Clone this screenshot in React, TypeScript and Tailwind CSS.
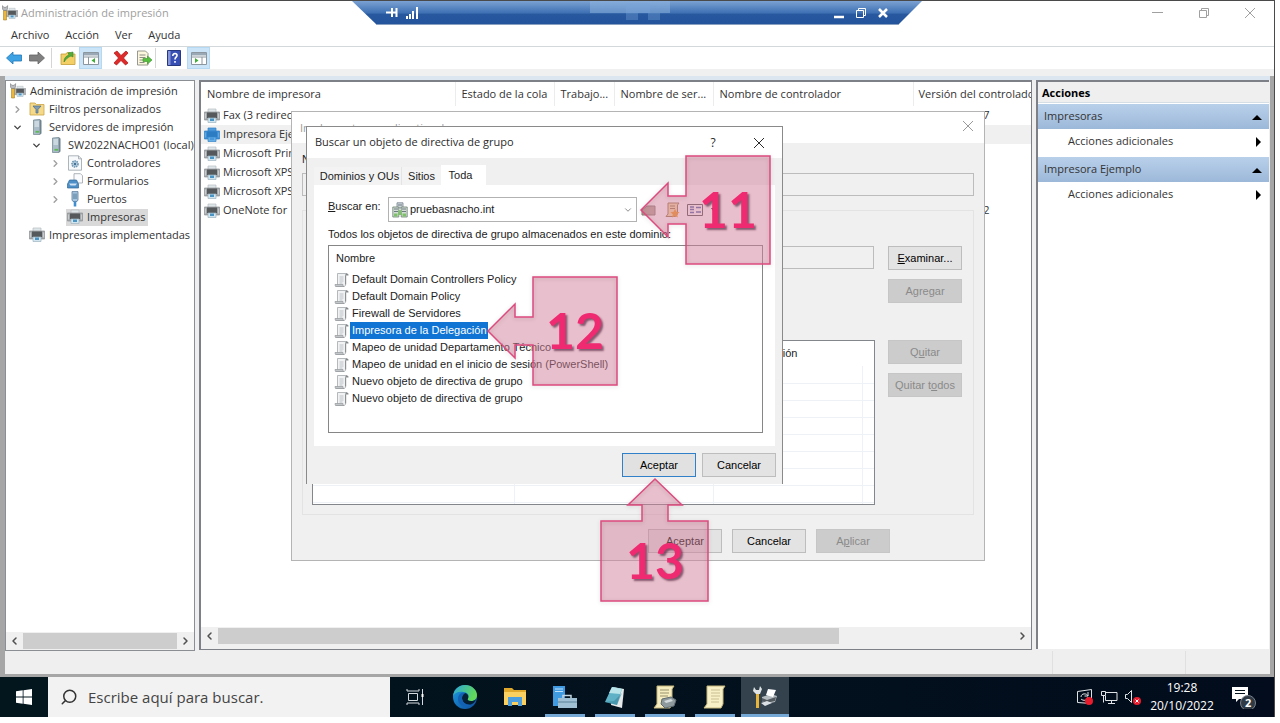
import type { ReactNode } from "react";
import { ChevronDown, ChevronLeft, ChevronRight, Search } from "lucide-react";

/* ── Data ────────────────────────────────────────────────────── */
type IconName = "manager" | "filter" | "server" | "driver" | "form" | "port" | "printer" | "printerBlue";

interface TreeNode {
  label: string;
  level: 0 | 1 | 2 | 3;
  icon: IconName;
  state?: "open" | "closed";
  selected?: boolean;
}

const TREE: TreeNode[] = [
  { label: "Administración de impresión", level: 0, icon: "manager" },
  { label: "Filtros personalizados", level: 1, icon: "filter", state: "closed" },
  { label: "Servidores de impresión", level: 1, icon: "server", state: "open" },
  { label: "SW2022NACHO01 (local)", level: 2, icon: "server", state: "open" },
  { label: "Controladores", level: 3, icon: "driver", state: "closed" },
  { label: "Formularios", level: 3, icon: "form", state: "closed" },
  { label: "Puertos", level: 3, icon: "port", state: "closed" },
  { label: "Impresoras", level: 3, icon: "printer", selected: true },
  { label: "Impresoras implementadas", level: 1, icon: "printer" },
];

const INDENT = { 0: "pl-[3px]", 1: "pl-[3px]", 2: "pl-[22px]", 3: "pl-[41px]" };

const PRINTERS = [
  { name: "Fax (3 redirecc", version: "10.0.17763.37" },
  { name: "Impresora Ejem", version: "", selected: true },
  { name: "Microsoft Print", version: "" },
  { name: "Microsoft XPS", version: "" },
  { name: "Microsoft XPS", version: "" },
  { name: "OneNote for", version: "16.0.7629.422" },
];

const POLICIES = [
  "Default Domain Controllers Policy",
  "Default Domain Policy",
  "Firewall de Servidores",
  "Impresora de la Delegación",
  "Mapeo de unidad Departamento Técnico",
  "Mapeo de unidad en el inicio de sesión (PowerShell)",
  "Nuevo objeto de directiva de grupo",
  "Nuevo objeto de directiva de grupo",
];

/* ── Small icons ─────────────────────────────────────────────── */
function PrinterShape({ blue = false }: { blue?: boolean }) {
  return (
    <>
      <path d="M4 1h8v4H4z" fill={blue ? "#4f9bdc" : "#dfe6ea"} stroke={blue ? "#3584c8" : "#b4bcc1"} strokeWidth=".7" />
      <path d="M.4 4h15.200v8H.4z" fill={blue ? "#3f8fd6" : "#a4a8ab"} stroke={blue ? "#2f7dc2" : "#8c9093"} strokeWidth=".7" />
      <path d="M3 4.500h10v5.500H3z" fill={blue ? "#2c7cc4" : "#55595c"} />
      <path d="M1.500 5.500v5M14.500 5.500v5" stroke={blue ? "#66aee6" : "#d3d6d8"} strokeWidth=".8" />
      <path d="M4 10h8v4.500H4z" fill={blue ? "#66aee6" : "#d3e6f0"} stroke={blue ? "#3584c8" : "#9fb4c0"} strokeWidth=".7" />
      <path d="M6 10.500h4v2.500H6z" fill={blue ? "#4b98da" : "#4b95c4"} />
    </>
  );
}

function Icon({ name }: { name: IconName }) {
  return (
    <svg viewBox="0 0 16 16" className="w-4 h-4 shrink-0" aria-hidden>
      {name === "printer" && <PrinterShape />}
      {name === "printerBlue" && <PrinterShape blue />}
      {name === "manager" && (
        <>
          <g transform="translate(4 2.500) scale(.76)">
            <PrinterShape />
          </g>
          <path d="M1.500 5h3v10h-3z" fill="#eab63c" stroke="#a58226" strokeWidth=".6" />
          <path d="M.4.600v3.400l1.300 1.500h2.600L5.600 4V.600L4.200 2.300H1.800z" fill="#b9bcbe" stroke="#75787a" strokeWidth=".6" />
        </>
      )}
      {name === "filter" && (
        <>
          <path d="M1 2h5l1.500 1.500H15V14H1z" fill="#f5d98a" stroke="#c9a545" strokeWidth=".8" />
          <path d="M4 5h8L9 8.500V12H7V8.500z" fill="#7f9db5" stroke="#4d6a82" strokeWidth=".7" />
        </>
      )}
      {name === "server" && (
        <>
          <path d="M4.500 1l6.500-.6V15.500H4.500z" fill="#a9bcc7" stroke="#6f828d" strokeWidth=".7" />
          <path d="M11 .4l1.500 1V14.500l-1.500 1z" fill="#6f828d" />
          <path d="M5.500 3H10M5.500 5H10M5.500 7H10" stroke="#eef4f7" />
          <path d="M6.500 12.800H10" stroke="#5dbb55" strokeWidth="1.800" />
        </>
      )}
      {name === "driver" && (
        <>
          <path d="M1.500.8h10l3 3V15.200h-13z" fill="#f7f9fb" stroke="#9aa2a8" strokeWidth=".8" />
          <path d="M11.500.8v3h3" fill="none" stroke="#9aa2a8" strokeWidth=".8" />
          <circle cx="8" cy="9" r="3" fill="#b7d0e2" stroke="#6c93b0" strokeDasharray="1.400 .8" strokeWidth="1.600" />
          <circle cx="8" cy="9" r="1.200" fill="#456f90" />
        </>
      )}
      {name === "form" && (
        <>
          <path d="M7 .7h6.500l2 2V10H7z" fill="#fafbfc" stroke="#9aa2a8" strokeWidth=".8" />
          <path d="M2.500 7h7l2 4v4H.5v-4z" fill="#4d8fc6" stroke="#2f689a" strokeWidth=".7" />
          <path d="M2 10.500h8l-1.500 2h-5z" fill="#cfe3f2" />
        </>
      )}
      {name === "port" && (
        <>
          <path d="M5 .6h6v8.400l-1 1.500H6L5 9z" fill="#a9c6e0" stroke="#5b7b99" strokeWidth=".8" />
          <path d="M6.700 10.500h2.600v5H6.700z" fill="#3f8fd0" />
          <path d="M7 2.500v5.500M9 2.500v5.500" stroke="#456f90" strokeWidth=".9" />
        </>
      )}
    </svg>
  );
}

function ScrollIcon() {
  return (
    <svg viewBox="0 0 16 16" className="w-4 h-4 shrink-0" aria-hidden>
      <path d="M3.500 1.500H13c-1.200 0-1.500 1-1.500 2v9c0 1.500-.5 2-2 2H1.500c1.500 0 2-.5 2-2z" fill="#f1f2f3" stroke="#a4a8ab" strokeWidth=".8" />
      <path d="M1 12.500h8c0 1.200.2 2 1 2H2.500c-1 0-1.500-.8-1.500-2z" fill="#c3c7ca" stroke="#94989b" strokeWidth=".7" />
      <path d="M11.500 3.500h3c0-1.300-.4-2-1.500-2-1 0-1.500.8-1.500 2z" fill="#85898c" />
      <path d="M11.700 3.500v9" stroke="#7f8386" strokeWidth=".9" />
      <path d="M5.500 5h4M5.500 7h4M5.500 9h4M5.500 11h3" stroke="#b3b7ba" strokeWidth=".8" />
    </svg>
  );
}

function DomainIcon() {
  return (
    <svg viewBox="0 0 16 16" className="w-4 h-4 shrink-0" aria-hidden>
      <path d="M5 .8h6V6H5z" fill="#cfd6da" stroke="#74808a" strokeWidth=".8" />
      <path d="M.8 5h6v10h-6zM9.200 5h6v10h-6z" fill="#d4ddd6" stroke="#6b7f70" strokeWidth=".8" />
      <path d="M2 7h4M2 9.500h4M10 7h4M10 9.500h4M6 3h4" stroke="#5f6f76" strokeWidth=".9" />
      <path d="M2 11.500h3.500v3H2zM10.500 11.500H14v3h-3.500zM6.500 9L8 7.500 9.500 9v4h-3z" fill="#7fc06a" />
    </svg>
  );
}

function CloseIcon({ className }: { className: string }) {
  return (
    <svg viewBox="0 0 12 12" className={className} fill="none" stroke="currentColor" aria-hidden>
      <path d="M1 1l10 10M11 1L1 11" />
    </svg>
  );
}

function RestoreIcon({ className }: { className: string }) {
  return (
    <svg viewBox="0 0 12 12" className={className} fill="none" stroke="currentColor" aria-hidden>
      <path d="M1.500 3.500h7v7h-7zM3.500 3.500v-2h7v7h-2" />
    </svg>
  );
}

/* ── Title bar, remote connection bar, menu, toolbar ─────────── */
function ConnectionBar() {
  return (
    <div className="absolute top-0 left-[352px] w-[570px] h-6 text-white">
      <svg viewBox="0 0 570 24" className="absolute inset-0 w-full h-full" preserveAspectRatio="none" aria-hidden>
        <defs>
          <linearGradient id="bar" x1="0" y1="0" x2="0" y2="1">
            <stop offset="0" stopColor="#7ba2d3" />
            <stop offset=".5" stopColor="#3e70b3" />
            <stop offset=".55" stopColor="#28599f" />
            <stop offset="1" stopColor="#23539b" />
          </linearGradient>
        </defs>
        <path d="M0 0h570l-24 24H25z" fill="url(#bar)" />
        <path d="M25 23.500h521" stroke="#8aa0c0" />
        <path d="M238 0h80v12h-80z" fill="#8fb5df" opacity=".5" />
        <path d="M274 2h24v10h-24zM274 12h12v7h-12zM296 12h12v7h-12z" fill="#7aa6da" opacity=".35" />
      </svg>
      <div className="relative flex items-center h-full pl-[33px] pr-[33px]">
        <button type="button" aria-label="Anclar" className="w-4 h-4">
          <svg viewBox="0 0 16 16" className="w-4 h-4" aria-hidden>
            <path d="M1 7.500h5M7 3v9M7 7.500h5M11.500 3v9" stroke="#fff" strokeWidth="2" />
          </svg>
        </button>
        <svg viewBox="0 0 14 14" className="w-3.5 h-3.5 ml-1" aria-hidden>
          <path d="M2 13v-3M5 13V8M8 13V5M12 13V1" stroke="#fff" strokeWidth="2" />
        </svg>
        <button type="button" aria-label="Minimizar" className="ml-auto w-3 h-3">
          <svg viewBox="0 0 12 12" className="w-3 h-3" aria-hidden>
            <path d="M1 10h10" stroke="#fff" strokeWidth="2.500" />
          </svg>
        </button>
        <button type="button" aria-label="Restaurar" className="ml-2.5 w-3 h-3">
          <RestoreIcon className="w-3 h-3" />
        </button>
        <button type="button" aria-label="Cerrar" className="ml-2.5 w-3 h-3">
          <svg viewBox="0 0 12 12" className="w-3 h-3" aria-hidden>
            <path d="M2 2l8 8M10 2l-8 8" stroke="#fff" strokeWidth="2.500" />
          </svg>
        </button>
      </div>
    </div>
  );
}

function TitleBar() {
  return (
    <header className="flex items-center h-6 pl-0.5 pr-[18px] text-[#a0a0a0]">
      <Icon name="manager" />
      <h1 className="ml-[3px]">Administración de impresión</h1>
      <div className="ml-auto flex items-center gap-[34px]">
        <button type="button" aria-label="Minimizar ventana" className="w-3 h-3">
          <svg viewBox="0 0 12 12" className="w-3 h-3" stroke="currentColor" aria-hidden>
            <path d="M0 5.500h11" />
          </svg>
        </button>
        <button type="button" aria-label="Restaurar ventana" className="w-3 h-3">
          <RestoreIcon className="w-3 h-3" />
        </button>
        <button type="button" aria-label="Cerrar ventana" className="w-3 h-3">
          <CloseIcon className="w-3 h-3" />
        </button>
      </div>
    </header>
  );
}

function ToolButton({ label, active = false, children }: { label: string; active?: boolean; children: ReactNode }) {
  return (
    <button
      type="button"
      aria-label={label}
      className={`flex items-center justify-center w-[23px] h-[22px] ${active ? "bg-[#cce4f7] border border-[#b5d8f3]" : ""}`}
    >
      <svg viewBox="0 0 16 16" className="w-4 h-4" aria-hidden>
        {children}
      </svg>
    </button>
  );
}

function Toolbar() {
  return (
    <div className="flex items-center h-[22px] pl-0.5">
      <ToolButton label="Atrás">
        <path d="M.5 8L7 2V5h8.500v6H7v3z" fill="#3da2e4" stroke="#2277b8" strokeWidth=".8" />
      </ToolButton>
      <ToolButton label="Adelante">
        <path d="M15.500 8L9 2V5H.5v6H9v3z" fill="#808080" stroke="#636363" strokeWidth=".8" />
      </ToolButton>
      <div className="w-px h-5 ml-[3px] mr-1 bg-[#d5d5d5]" />
      <ToolButton label="Subir un nivel">
        <path d="M1 4h5l1-1.500h3L11 4h4v10.500H1z" fill="#f3cf66" stroke="#c49f37" strokeWidth=".8" />
        <path d="M4 12c0-4 2-6 5-7L8 3l5-1v5l-2-1c-3 1-5 3-7 6z" fill="#53ae39" stroke="#38852a" strokeWidth=".6" />
      </ToolButton>
      <ToolButton label="Mostrar u ocultar árbol" active>
        <path d="M.5 2.500h15v12H.5z" fill="#fff" stroke="#8b969e" />
        <path d="M1 3h14v2.500H1z" fill="#9aa9b5" />
        <path d="M1 7h14M5.500 7v7" stroke="#8b969e" />
        <path d="M12 8v5L8.500 10.500z" fill="#3fae36" />
      </ToolButton>
      <div className="w-[7px]" />
      <ToolButton label="Eliminar">
        <path d="M1 3l3-2 4 4.500L13 1l2 2-4.500 5 4.500 5-2.500 2L8 10.500 3.500 15 1 13l4.500-5z" fill="#e02b2b" stroke="#a81616" strokeWidth=".7" />
      </ToolButton>
      <ToolButton label="Exportar lista">
        <path d="M1.500 1h8L12 3.500V15H1.500z" fill="#fbf6dd" stroke="#8c8f86" strokeWidth=".9" />
        <path d="M3.500 5h6M3.500 7.500h6M3.500 10h4M3.500 12.500h5" stroke="#8c8f86" />
        <path d="M7 8.500h4.500V6L16 10l-4.500 4v-2.500H7z" fill="#55bf3e" stroke="#35902a" strokeWidth=".6" />
      </ToolButton>
      <div className="w-px h-5 mr-1.5 bg-[#d5d5d5]" />
      <ToolButton label="Ayuda">
        <path d="M1.500.5h13v15h-13z" fill="#3850b5" stroke="#26387f" />
        <path d="M2 1h2.500v14H2z" fill="#8796d8" />
        <path d="M6.800 6c0-3.500 4.700-3 4.200-.3C10.700 7.300 9 7 9 9.500M9 11v1.800" fill="none" stroke="#fff" strokeWidth="1.600" />
      </ToolButton>
      <div className="w-0.5" />
      <ToolButton label="Mostrar u ocultar panel de acciones" active>
        <path d="M.5 2.500h15v12H.5z" fill="#fff" stroke="#8b969e" />
        <path d="M1 3h14v2.500H1z" fill="#9aa9b5" />
        <path d="M1 7h14M11 7v7" stroke="#8b969e" />
        <path d="M4 8v5l3.500-2.500z" fill="#3fae36" />
      </ToolButton>
    </div>
  );
}

/* ── Console panes ───────────────────────────────────────────── */
function ScrollBar({ thumb }: { thumb: string }) {
  return (
    <div className="flex items-center h-[18px] mt-auto bg-[#f0f0f0] text-[#505050]">
      <ChevronLeft className="w-[17px] h-3 shrink-0" strokeWidth={3} />
      <div className="flex-1 flex h-4">
        <div className={`h-4 bg-[#cdcdcd] ${thumb}`} />
      </div>
      <ChevronRight className="w-[17px] h-3 shrink-0" strokeWidth={3} />
    </div>
  );
}

function TreePane() {
  return (
    <nav className="flex flex-col w-[190px] shrink-0 bg-white border border-[#8b8f94] overflow-hidden">
      <ul className="pt-px">
        {TREE.map((node) => (
          <li key={node.label} className={`flex items-center h-[18px] ${INDENT[node.level]}`}>
            {node.level > 0 && (
              <span className="flex justify-center w-[17px] mr-0.5 shrink-0">
                {node.state === "open" && <ChevronDown className="w-[11px] h-[11px] text-[#404040]" strokeWidth={3} />}
                {node.state === "closed" && <ChevronRight className="w-[11px] h-[11px] text-[#a0a0a0]" strokeWidth={3} />}
              </span>
            )}
            <span className={`flex items-center gap-1 h-[17px] px-px ${node.selected ? "bg-[#d9d9d9]" : ""}`}>
              <Icon name={node.icon} />
              <span className="whitespace-nowrap pr-0.5">{node.label}</span>
            </span>
          </li>
        ))}
      </ul>
      <ScrollBar thumb="w-full" />
    </nav>
  );
}

function PrinterList() {
  return (
    <section className="flex flex-col flex-1 min-w-0 mb-px bg-white border-2 border-r border-b border-[#7d8187] overflow-hidden">
      <table className="w-full table-fixed text-left">
        <thead>
          <tr className="h-6 whitespace-nowrap">
            <th className="w-[254px] pl-1.5 font-normal">Nombre de impresora</th>
            <th className="w-[99px] pl-1.5 font-normal border-l border-[#ececec]">Estado de la cola</th>
            <th className="w-[60px] pl-1.5 font-normal border-l border-[#ececec]">Trabajo...</th>
            <th className="w-[99px] pl-1.5 font-normal border-l border-[#ececec]">Nombre de ser...</th>
            <th className="w-[200px] pl-1.5 font-normal border-l border-[#ececec]">Nombre de controlador</th>
            <th className="pl-[5px] font-normal border-l border-[#ececec] overflow-hidden">Versión del controlador</th>
          </tr>
        </thead>
        <tbody>
          {PRINTERS.map((printer, i) => (
            <tr key={i} className={`h-[19px] ${printer.selected ? "bg-[#f0f0f0]" : ""}`}>
              <td className="pl-[3px]">
                <span className="flex items-center gap-[3px] whitespace-nowrap">
                  <Icon name={printer.selected ? "printerBlue" : "printer"} />
                  {printer.name}
                </span>
              </td>
              <td />
              <td />
              <td />
              <td />
              <td className="pl-[5px]">{printer.version}</td>
            </tr>
          ))}
        </tbody>
      </table>
      <ScrollBar thumb="w-[78%]" />
      <div className="h-1 bg-[#f0f0f0]" />
    </section>
  );
}

function ActionsPane() {
  return (
    <aside className="w-[233px] shrink-0 mb-0.5 bg-white border-t-2 border-l-2 border-[#7d8187]">
      <h2 className="h-[21px] pl-1 leading-[21px] font-bold bg-[#efefef] border-b border-[#d5dde5] text-black">Acciones</h2>
      {["Impresoras", "Impresora Ejemplo"].map((title) => (
        <div key={title} className="mt-px mb-[3px]">
          <h3 className="flex items-center justify-between h-[25px] pl-1.5 pr-[7px] bg-linear-to-b from-[#b9d0ea] to-[#9cb8d9]">
            {title}
            <svg viewBox="0 0 10 6" className="w-2.5 h-1.5" aria-hidden>
              <path d="M0 6l5-5 5 5z" />
            </svg>
          </h3>
          <button type="button" className="flex items-center justify-between w-full h-[25px] pl-[30px] pr-[7px]">
            Acciones adicionales
            <svg viewBox="0 0 6 10" className="w-1.5 h-2.5" aria-hidden>
              <path d="M0 0l5 5-5 5z" />
            </svg>
          </button>
        </div>
      ))}
    </aside>
  );
}

/* ── Dialogs ─────────────────────────────────────────────────── */
function DialogButton({ disabled, primary, children }: { disabled?: boolean; primary?: boolean; children: ReactNode }) {
  const look = disabled
    ? "bg-[#cccccc] border-[#c6c6c6] text-[#8a8a8a]"
    : primary
      ? "bg-[#e1e1e1] border-[#2f7fc9] text-black"
      : "bg-[#e3e3e3] border-[#bdbdbd] text-black";
  return (
    <button type="button" disabled={disabled} className={`w-[74px] h-6 shrink-0 border ${look}`}>
      {children}
    </button>
  );
}

function DeployDialog() {
  return (
    <div
      role="dialog"
      aria-label="Implementar con directiva de grupo"
      className="absolute left-[291px] top-[110px] w-[694px] bg-[#f0f0f0] border border-[#b4b4b4] font-['Liberation_Sans',sans-serif] text-[11px] text-[#222]"
    >
      <div className="flex items-start justify-between h-[31px] pl-2 pt-2 pr-2.5 bg-white font-['Open_Sans','Noto_Sans',sans-serif] text-[#9a9a9a]">
        <span>Implementar con directiva de grupo</span>
        <button type="button" aria-label="Cerrar Implementar" className="w-3 h-3">
          <CloseIcon className="w-3 h-3" />
        </button>
      </div>
      <div className="px-2.5 pt-2">
        <label htmlFor="printer-name" className="block h-4 leading-4">
          Nombre de impresora:
        </label>
        <input id="printer-name" readOnly className="block w-full h-[23px] mt-[6px] border border-[#bcbcbc] bg-[#f0f0f0]" />
        <div className="mt-[14px] border border-[#e3e3e3] pl-[9px] pr-[11px] h-[305px]">
          <div className="flex justify-between items-start pt-[35px]">
            <input aria-label="Nombre de GPO" readOnly className="w-[562px] h-[23px] border border-[#bcbcbc] bg-[#f0f0f0]" />
            <div className="flex flex-col gap-[9px]">
              <DialogButton>
                <u>E</u>xaminar...
              </DialogButton>
              <DialogButton disabled>Agregar</DialogButton>
            </div>
          </div>
          <div className="flex justify-between items-start pt-[37px]">
            <div className="w-[563px] h-[165px] border border-[#83868a] bg-white overflow-hidden">
              <table className="w-full table-fixed text-left">
                <thead>
                  <tr className="h-[25px]">
                    <th className="w-[201px]" />
                    <th className="w-[199px]" />
                    <th className="w-[149px] pl-px font-normal">Tipo de conexión</th>
                    <th />
                  </tr>
                </thead>
                <tbody>
                  {Array.from({ length: 9 }).map((_, i) => (
                    <tr key={i} className="h-[17px] border-b border-[#eef1f5]">
                      <td className="border-r border-[#eef1f5]" />
                      <td className="border-r border-[#eef1f5]" />
                      <td className="border-r border-[#eef1f5]" />
                      <td />
                    </tr>
                  ))}
                </tbody>
              </table>
            </div>
            <div className="flex flex-col gap-[9px]">
              <DialogButton disabled>
                Q<u>u</u>itar
              </DialogButton>
              <DialogButton disabled>
                Quitar t<u>o</u>dos
              </DialogButton>
            </div>
          </div>
        </div>
      </div>
      <div className="flex justify-end gap-2.5 pt-[14px] pb-[7px] pr-[94px]">
        <DialogButton>Aceptar</DialogButton>
        <DialogButton>Cancelar</DialogButton>
        <DialogButton disabled>
          A<u>p</u>licar
        </DialogButton>
      </div>
    </div>
  );
}

function BrowseDialog() {
  return (
    <div
      role="dialog"
      aria-label="Buscar un objeto de directiva de grupo"
      className="absolute left-[306px] top-[125px] w-[477px] bg-[#f0f0f0] border border-b-0 border-[#8a8a8a] font-['Liberation_Sans',sans-serif] text-[11px] text-[#1c1c1c]"
    >
      <div className="flex items-center h-[31px] pl-2 pr-[17px] bg-white font-['Open_Sans','Noto_Sans',sans-serif] text-[#2b2b2b]">
        <span>Buscar un objeto de directiva de grupo</span>
        <button type="button" aria-label="Ayuda del cuadro" className="ml-auto w-4 text-xs">
          ?
        </button>
        <button type="button" aria-label="Cerrar Buscar" className="ml-8 w-3 h-3">
          <CloseIcon className="w-3 h-3" />
        </button>
      </div>
      <div className="px-[7px] pt-2">
        <div role="tablist" className="flex items-end h-[19px]">
          <button type="button" role="tab" aria-selected={false} className="h-[18px] w-[88px] pl-1 whitespace-nowrap bg-[#f3f3f3] border-r border-[#e4e4e4]">
            Dominios y OUs
          </button>
          <button type="button" role="tab" aria-selected={false} className="h-[18px] w-[39px] bg-[#f3f3f3]">
            Sitios
          </button>
          <button type="button" role="tab" aria-selected className="h-5 w-[45px] pr-1.5 bg-white">
            Toda
          </button>
        </div>
        <div className="bg-white px-[14px] pt-3 pb-[13px]">
          <div className="flex items-center">
            <label htmlFor="look-in" className="w-[60px] pb-[6px]">
              <u>B</u>uscar en:
            </label>
            <div className="flex items-center w-[249px] h-[25px] pl-[3px] pr-[3px] border border-[#b2b2b2]">
              <DomainIcon />
              <select id="look-in" className="flex-1 appearance-none pl-0.5 outline-none">
                <option>pruebasnacho.int</option>
              </select>
              <ChevronDown className="w-[10px] h-[10px] text-[#777]" />
            </div>
            <div className="flex items-center ml-1 gap-[7px]">
              <button type="button" aria-label="Subir" className="w-4 h-4">
                <svg viewBox="0 0 16 16" className="w-4 h-4" aria-hidden>
                  <path d="M1 8l5-4h8v9H1z" fill="#b7a79a" stroke="#897a72" />
                </svg>
              </button>
              <button type="button" aria-label="Nuevo objeto" className="w-4 h-4">
                <svg viewBox="0 0 16 16" className="w-4 h-4" aria-hidden>
                  <path d="M4 1h11l-1.500 2v9l-2 2.500H2L4 12z" fill="#f3dfa8" stroke="#9a7a50" />
                  <path d="M6 4h5M6 6.500h5" stroke="#9a7a50" />
                  <path d="M11 7l1.400 2.800 3.100.4-2.300 2.100.6 3.100-2.800-1.500-2.800 1.500.6-3.100-2.300-2.100 3.100-.4z" fill="#f19a20" />
                </svg>
              </button>
              <button type="button" aria-label="Ver" className="flex items-center gap-2 w-[30px] h-4">
                <svg viewBox="0 0 16 16" className="w-4 h-4 shrink-0" aria-hidden>
                  <path d="M.5 2.500h15v11H.5z" fill="#fff" stroke="#555" />
                  <path d="M3 5h4M3 7.500h4M3 10.500h4M9 5.500h5M9 10h5" stroke="#5566a8" strokeWidth="1.500" />
                </svg>
                <svg viewBox="0 0 6 4" className="w-1.5 h-1 shrink-0" aria-hidden>
                  <path d="M0 0h6L3 4z" />
                </svg>
              </button>
            </div>
          </div>
          <p className="mt-1 h-4 leading-4 whitespace-nowrap">Todos los objetos de directiva de grupo almacenados en este dominio:</p>
          <div className="mt-[3px] h-[188px] w-[435px] border border-[#868686]">
            <table className="w-full text-left">
              <thead>
                <tr className="h-[25px]">
                  <th className="pl-[7px] font-normal">Nombre</th>
                </tr>
              </thead>
              <tbody>
                {POLICIES.map((policy, i) => (
                  <tr key={i} className="h-[17px]">
                    <td className="pl-[5px]">
                      <span className="flex items-center h-[17px]">
                        <ScrollIcon />
                        <span
                          className={`pl-0.5 leading-[17px] whitespace-nowrap ${i === 3 ? "bg-[#0f74d3] pr-px text-white" : ""}`}
                        >
                          {policy}
                        </span>
                      </span>
                    </td>
                  </tr>
                ))}
              </tbody>
            </table>
          </div>
        </div>
      </div>
      <div className="flex justify-end gap-1.5 pt-[7px] pb-[7px] pr-1.5">
        <DialogButton primary>Aceptar</DialogButton>
        <DialogButton>Cancelar</DialogButton>
      </div>
    </div>
  );
}

/* ── Step callouts ───────────────────────────────────────────── */
const CALLOUT_TEXT =
  "absolute font-['Lato',sans-serif] font-bold text-[50px] leading-[50px] text-[#f02a70] [text-shadow:2px_2px_2px_rgba(70,20,50,0.6)]";

// The shadow belongs to the outline only, so the tinted fill stays clear
function CalloutShape({ d, viewBox }: { d: string; viewBox: string }) {
  return (
    <svg viewBox={viewBox} className="w-full h-full overflow-visible" aria-hidden>
      <path d={d} fill="#d17f9a" fillOpacity=".5" />
      <path d={d} fill="none" stroke="#dc4a7e" strokeWidth="1.500" className="drop-shadow-sm" />
    </svg>
  );
}

function LeftCallout({ step, className }: { step: number; className: string }) {
  return (
    <div className={`absolute w-[132px] h-[110px] ${className}`}>
      <CalloutShape viewBox="0 0 132 110" d="M1 55L28 28v13h18V1h84v108H46V69H28v13z" />
      <span className={`${CALLOUT_TEXT} left-[59px] top-[29px]`}>{step}</span>
    </div>
  );
}

function UpCallout({ step, className }: { step: number; className: string }) {
  return (
    <div className={`absolute w-[110px] h-[124px] ${className}`}>
      <CalloutShape viewBox="0 0 110 124" d="M55 1l27 26H68v16h40v80H1V43h41V27H28z" />
      <span className={`${CALLOUT_TEXT} left-[26px] top-[57px]`}>{step}</span>
    </div>
  );
}

/* ── Taskbar ─────────────────────────────────────────────────── */
function TaskButton({ label, state, children }: { label: string; state?: "running" | "active"; children: ReactNode }) {
  return (
    <button
      type="button"
      aria-label={label}
      className={`flex flex-col items-center w-12 h-full mx-px ${state === "active" ? "bg-[#33424d]" : ""}`}
    >
      <svg viewBox="0 0 24 24" className="w-6 h-6 mt-2" aria-hidden>
        {children}
      </svg>
      {state && <span className={`mt-auto h-[3px] bg-[#76a8d6] ${state === "active" ? "w-12" : "w-10"}`} />}
    </button>
  );
}

function Taskbar() {
  return (
    <footer className="flex items-center h-10 bg-linear-to-r from-[#03161e] to-[#020c1c] text-white">
      <button type="button" aria-label="Inicio" className="flex items-center justify-center w-12 h-full">
        <svg viewBox="0 0 16 16" className="w-4 h-4" fill="#fff" aria-hidden>
          <path d="M0 2.300l6.700-1v6.300H0zM7.500 1.200L16 0v7.600H7.500zM0 8.400h6.700v6.300l-6.700-1zM7.500 8.400H16V16l-8.500-1.200z" />
        </svg>
      </button>
      <div className="flex items-center w-[342px] h-full pl-3 bg-[#f2f2f2]">
        <Search className="w-[18px] h-[18px] text-[#333] -scale-x-100" strokeWidth={2} />
        <input
          type="text"
          aria-label="Buscar"
          placeholder="Escribe aquí para buscar."
          className="flex-1 ml-2.5 bg-transparent text-[15px] outline-none text-[#444] placeholder:text-[#444]"
        />
      </div>
      <TaskButton label="Vista de tareas">
        <path d="M4 4v2M16 4v2M4 18v2M16 18v2M4 6h12M4 18h12" stroke="#d5dade" fill="none" />
        <path d="M5.500 8.500h9v7h-9zM19.500 4v16" stroke="#d5dade" fill="none" />
        <path d="M18.500 9h2v3h-2z" fill="#fff" />
      </TaskButton>
      <TaskButton label="Microsoft Edge">
        <defs>
          <linearGradient id="edge-top" x1="0" y1="0" x2="1" y2=".4">
            <stop offset="0" stopColor="#2aa5de" />
            <stop offset="1" stopColor="#62d958" />
          </linearGradient>
          <linearGradient id="edge-low" x1="0" y1="0" x2="1" y2="1">
            <stop offset="0" stopColor="#1b9de2" />
            <stop offset="1" stopColor="#0f4c9c" />
          </linearGradient>
        </defs>
        <circle cx="12" cy="12" r="12" fill="url(#edge-low)" />
        <path d="M0 11C1 4 6 0 12 0c7 0 12 5 12 10 0 4-3 6-6 6-3 0-4-1-3-2.500 2-3.500-1-6.500-4.500-6.500C5.500 6 1.500 8 0 11z" fill="url(#edge-top)" />
        <path d="M9 13c0-2 1-4 3-5 2.500.5 4 3 3 5.500-1 1.500 0 2.500 3 2.500 2 0 4-.6 5-1.800-1 3-3 4.600-5 5.300C13 20.500 9 17 9 13z" fill="#03121d" opacity=".85" />
        <path d="M5 14c0-4 3-7 7-6-2 1-3 3-3 5 0 4 4 7.500 9 6.500C12 24 5 20 5 14z" fill="#1261b4" />
      </TaskButton>
      <TaskButton label="Explorador de archivos">
        <path d="M1 3h8l2 2h12v15H1z" fill="#e0a92c" />
        <path d="M1 7h22v13H1z" fill="#fad160" />
        <path d="M5 12h14v9h-4v-4H9v4H5z" fill="#4b9fe0" />
      </TaskButton>
      <TaskButton label="Administrador del servidor" state="running">
        <path d="M0 1h12v20H0z" fill="#3f9ae2" />
        <path d="M2 4h8M2 6.500h8" stroke="#bfe0f8" />
        <path d="M10 13v-2.500h8V13" fill="none" stroke="#c3d6e2" strokeWidth="1.500" />
        <path d="M5 13h19v10H5z" fill="#9fc0d4" />
        <path d="M5 17h19" stroke="#5b8098" />
      </TaskButton>
      <TaskButton label="Bloc de notas" state="running">
        <path d="M10 2l11 2-2 19-11-3z" fill="#e5e9ea" />
        <path d="M9 2l10 2-5 16L2 17z" fill="#5fb2c6" />
        <path d="M9 2l10 2-2 5L6 8z" fill="#b9e4ea" />
        <path d="M2 17l12 3 5-12-8 8z" fill="#2f7d95" opacity=".5" />
      </TaskButton>
      <TaskButton label="Administración de directivas" state="running">
        <path d="M4 1h17l-2 3v15l-2 4H1l3-4z" fill="#f5ecc0" stroke="#c6b67c" />
        <path d="M7 5h9M7 8h9M7 11h8" stroke="#9a916a" />
        <path d="M9 14l9-2 5 3-2 6-9 2-4-4z" fill="#8e999d" stroke="#5f6b70" />
        <path d="M11 16l7-2 2 2-7 2z" fill="#d3dadd" />
      </TaskButton>
      <TaskButton label="Editor de directivas" state="running">
        <path d="M4 1h18l-2 3v15l-2 4H1l3-4z" fill="#f7efc6" stroke="#c6b67c" />
        <path d="M8 5h9M8 8h9M8 11h9M8 14h8M8 17h8" stroke="#cabf92" />
      </TaskButton>
      <TaskButton label="Administración de impresión" state="active">
        <path d="M3 8h3v15H3z" fill="#e9b43a" />
        <path d="M1 2l2 3h3l1-4 2 3-2 5H3L0 6z" fill="#dfe3e5" />
        <path d="M9 12l9-3 6 2-2 6-9 2-4-3z" fill="#b5bcc0" />
        <path d="M15 4l8 1-3 7-7-2z" fill="#fff" />
        <path d="M9 13l5 2 9-3-1 4-9 2-4-2z" fill="#535b60" />
        <path d="M8 18l6-2 5 2-7 3z" fill="#dbe1e4" />
      </TaskButton>

      {/* Tray */}
      <div className="flex items-center ml-auto pr-[18px]">
        <svg viewBox="0 0 18 18" className="w-[18px] h-[18px]" aria-hidden>
          <path d="M1.500 3.500l14-2v14l-14-1z" fill="none" stroke="#dfe3e6" />
          <path d="M5 9c0-4 6-4 7-1M12 4v4H8.500M12 9c0 4-5 4-7 2" fill="none" stroke="#dfe3e6" />
          <circle cx="13" cy="13" r="4" fill="#e81c2c" />
        </svg>
        <svg viewBox="0 0 18 18" className="w-[18px] h-[18px] ml-1.5" fill="none" stroke="#dfe3e6" aria-hidden>
          <path d="M6 4.500h11v8H5.500V8M8 15.500h7M11.500 12.500v3M1.500 3.500h4v4h-4zM3.500 7.500v7" />
        </svg>
        <svg viewBox="0 0 18 18" className="w-[18px] h-[18px] ml-1.5" aria-hidden>
          <path d="M1.500 6.500h2l4-4v12l-4-4h-2z" fill="none" stroke="#dfe3e6" />
          <circle cx="13" cy="13" r="4" fill="#e81c2c" />
          <path d="M11.500 11.500l3 3M14.500 11.500l-3 3" stroke="#fff" />
        </svg>
        <div className="w-20 text-center text-xs leading-[18px]">
          <p>19:28</p>
          <p>20/10/2022</p>
        </div>
        <button type="button" aria-label="Notificaciones" className="relative ml-2.5 w-6 h-6">
          <svg viewBox="0 0 24 24" className="w-6 h-6" aria-hidden>
            <path d="M0 2h16v12H7l-3 3v-3H0z" fill="#fff" />
            <path d="M3 5.500h10M3 8.500h10" stroke="#03121d" />
            <circle cx="16" cy="18" r="7.500" fill="#2f3a44" stroke="#77828b" />
          </svg>
          <span className="absolute left-[13px] top-[10px] text-[11px] leading-4 font-bold">2</span>
        </button>
      </div>
    </footer>
  );
}

/* ── Page ────────────────────────────────────────────────────── */
export default function App() {
  return (
    <div className="min-h-screen flex flex-col pr-[5px] pb-1.5 bg-white font-['Open_Sans','Noto_Sans',sans-serif] text-[11px] text-[#333]">
      <div className="relative flex-1 flex flex-col border-t border-r border-[#4a4a4a]">
        <ConnectionBar />
        <div className="flex-1 flex flex-col">
          <TitleBar />
          <nav className="flex items-center gap-4 h-[22px] pl-[11px] border-b border-[#d3d8da]">
            {["Archivo", "Acción", "Ver", "Ayuda"].map((item) => (
              <button key={item} type="button">
                {item}
              </button>
            ))}
          </nav>
          <Toolbar />
          <div className="h-[7px] bg-[#f0f0f0]" />
          <div className="flex-1 flex flex-col bg-[#efefef] border-l-[5px] border-r-4 border-b-3 border-[#a6a6a6]">
            <div className="flex-1 flex gap-1 pr-px border-t-4 border-[#dce6f0]">
              <TreePane />
              <PrinterList />
              <ActionsPane />
            </div>
            <div className="flex justify-end h-[23px]">
              <div className="w-[133px] border-l border-[#e0e0e0]" />
              <div className="w-[85px] border-l border-[#e0e0e0]" />
            </div>
          </div>
        </div>
        <Taskbar />
        <DeployDialog />
        <BrowseDialog />
        <LeftCallout step={11} className="left-[640px] top-[154px]" />
        <LeftCallout step={12} className="left-[487px] top-[275px]" />
        <UpCallout step={13} className="left-[600px] top-[477px]" />
      </div>
    </div>
  );
}
